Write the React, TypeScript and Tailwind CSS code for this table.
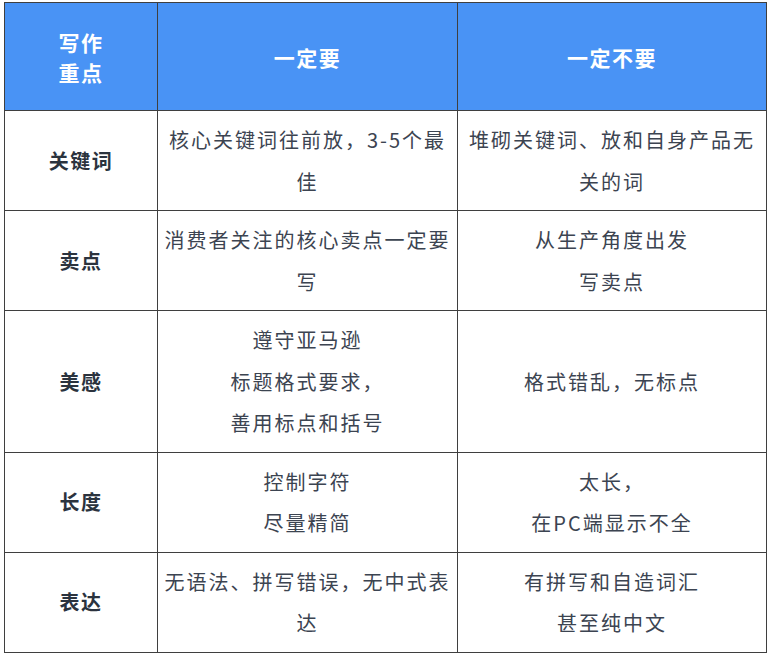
const rows: { key: string; yes: string[]; no: string[] }[] = [
  { key: '关键词', yes: ['核心关键词往前放，3-5个最', '佳'], no: ['堆砌关键词、放和自身产品无', '关的词'] },
  { key: '卖点', yes: ['消费者关注的核心卖点一定要', '写'], no: ['从生产角度出发', '写卖点'] },
  { key: '美感', yes: ['遵守亚马逊', '标题格式要求，', '善用标点和括号'], no: ['格式错乱，无标点'] },
  { key: '长度', yes: ['控制字符', '尽量精简'], no: ['太长，', '在PC端显示不全'] },
  { key: '表达', yes: ['无语法、拼写错误，无中式表', '达'], no: ['有拼写和自造词汇', '甚至纯中文'] },
];

function Lines({ lines }: { lines: string[] }) {
  return (
    <>
      {lines.map((line, i) => (
        <div key={i} className="whitespace-nowrap">
          {line}
        </div>
      ))}
    </>
  );
}

export default function App() {
  return (
    <div
      className="min-h-[655px] bg-white pl-[4px] pt-[2px]"
      style={{ fontFamily: '"Noto Sans CJK SC", "Noto Sans", sans-serif' }}
    >
      <table className="w-[762px] table-fixed border-collapse border border-[#3f3f3f] text-center">
        <colgroup>
          <col className="w-[153px]" />
          <col className="w-[300px]" />
          <col className="w-[309px]" />
        </colgroup>
        <thead>
          <tr className="h-[108px] bg-[#4993f5] text-[21px] leading-[30px] font-bold tracking-[1.5px] text-white">
            <th className="border border-[#3f3f3f] px-2">
              写作
              <br />
              重点
            </th>
            <th className="border border-[#3f3f3f] px-2">一定要</th>
            <th className="border border-[#3f3f3f] px-2">一定不要</th>
          </tr>
        </thead>
        <tbody>
          {rows.map((row) => (
            <tr key={row.key} className="text-[20px] leading-[41.5px] tracking-[2px]">
              <td className="border border-[#3f3f3f] px-1 py-2 font-bold tracking-[1.5px] text-[#2b333e]">{row.key}</td>
              <td className="border border-[#3f3f3f] px-1 py-2 text-[#3c4451]">
                <Lines lines={row.yes} />
              </td>
              <td className="border border-[#3f3f3f] px-1 py-2 text-[#3c4451]">
                <Lines lines={row.no} />
              </td>
            </tr>
          ))}
        </tbody>
      </table>
    </div>
  );
}
